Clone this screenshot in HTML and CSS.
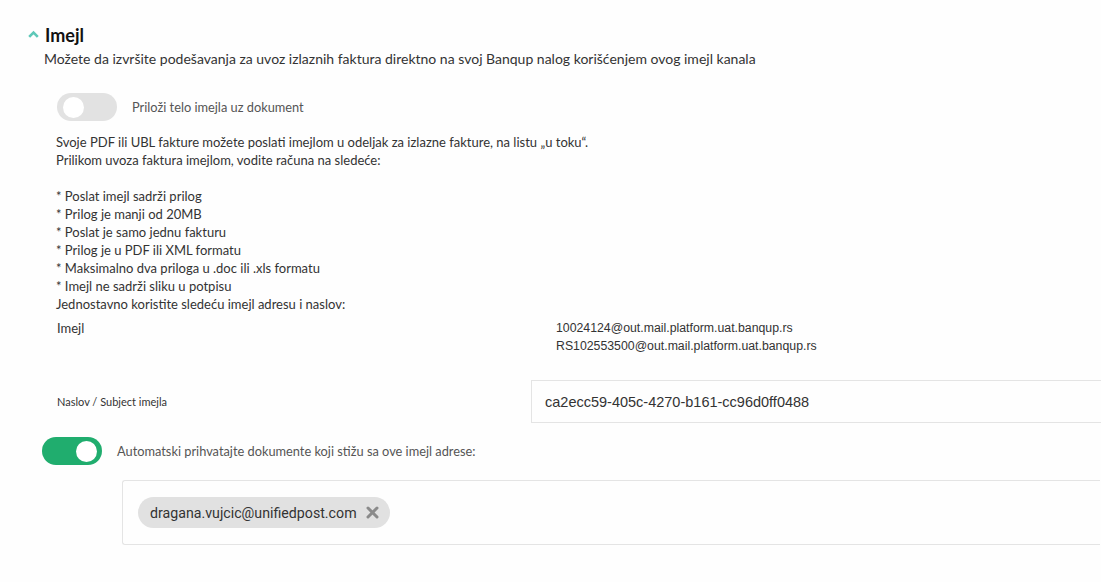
FILE: index.html
```html
<!DOCTYPE html>
<html lang="sr">
<head>
    <meta charset="UTF-8">
    <title>Imejl</title>
    <link rel="stylesheet" href="styles.css">
</head>
<body>
<div class="panel">
    <h2 class="title">
        <svg class="chev" width="11" height="8" viewBox="0 0 11 8"><path d="M1.2 6.8 L5.5 2.5 L9.8 6.8" fill="none" stroke="#5ec8b8" stroke-width="2.6"/></svg>
        Imejl
    </h2>
    <p class="desc">Možete da izvršite podešavanja za uvoz izlaznih faktura direktno na svoj Banqup nalog korišćenjem ovog imejl kanala</p>

    <div class="opt opt_body">
        <span class="switch"><span class="knob"></span></span>
        <span class="opt_label">Priloži telo imejla uz dokument</span>
    </div>

    <div class="info">
        <p>Svoje PDF ili UBL fakture možete poslati imejlom u odeljak za izlazne fakture, na listu „u toku“.</p>
        <p>Prilikom uvoza faktura imejlom, vodite računa na sledeće:</p>
        <p>&nbsp;</p>
        <p>* Poslat imejl sadrži prilog</p>
        <p>* Prilog je manji od 20MB</p>
        <p>* Poslat je samo jednu fakturu</p>
        <p>* Prilog je u PDF ili XML formatu</p>
        <p>* Maksimalno dva priloga u .doc ili .xls formatu</p>
        <p>* Imejl ne sadrži sliku u potpisu</p>
        <p>Jednostavno koristite sledeću imejl adresu i naslov:</p>
    </div>

    <div class="field">
        <div class="f_label">Imejl</div>
        <div class="f_value mails">
            <p>10024124@out.mail.platform.uat.banqup.rs</p>
            <p>RS102553500@out.mail.platform.uat.banqup.rs</p>
        </div>
    </div>

    <div class="field field_subject">
        <div class="f_label small">Naslov / Subject imejla</div>
        <div class="f_value input">ca2ecc59-405c-4270-b161-cc96d0ff0488</div>
    </div>

    <div class="opt opt_auto">
        <span class="switch on"><span class="knob"></span></span>
        <span class="opt_label">Automatski prihvatajte dokumente koji stižu sa ove imejl adrese:</span>
    </div>

    <div class="tags">
        <span class="chip">dragana.vujcic@unifiedpost.com
            <svg class="x" width="13" height="13" viewBox="0 0 13 13"><path d="M2 2 L11 11 M11 2 L2 11" stroke="#8a8a8a" stroke-width="3" stroke-linecap="round"/></svg>
        </span>
    </div>
</div>
</body>
</html>
```

FILE: styles.css
```css
*{margin: 0;padding: 0;box-sizing: border-box;}
html,body{background: #fefefe;overflow: hidden;}
body{font-family: Lato, "Noto Sans", sans-serif;color: #333;}
.panel{width: 1100px;padding: 24px 0 0 28px;}
.title{display: flex;align-items: center;gap: 6px;font-size: 18px;font-weight: 700;color: #111;line-height: 22px;}
.chev{margin-top: -3px;}
.desc{margin: 4px 0 0 16px;font-size: 14px;line-height: 18px;color: #333;}
.opt{display: flex;align-items: center;}
.opt_body{margin: 25px 0 0 29px;}
.opt_auto{margin: 14px 0 0 14px;}
.switch{display: inline-block;flex: none;width: 60px;height: 28px;border-radius: 14px;background: #e2e2e2;position: relative;}
.switch .knob{position: absolute;left: 6px;top: 3.5px;width: 21px;height: 21px;border-radius: 50%;background: #fff;}
.switch.on{background: #20ad6e;}
.switch.on .knob{left: 34px;}
.opt_label{font-size: 12.8px;color: #555;margin-left: 15px;}
.info{margin: 12px 0 0 28px;font-size: 13px;line-height: 18px;color: #333;}
.field{display: flex;margin: 6px 0 0 29px;}
.f_label{width: 474px;flex: none;font-size: 13px;line-height: 18px;}
.f_label.small{font-size: 11px;}
.mails{padding-left: 25px;font-family: "Liberation Sans", Arial, sans-serif;font-size: 12.3px;line-height: 18px;color: #333;}
.field_subject{margin-top: 25px;align-items: center;}
.input{flex: none;width: 600px;height: 43px;border: 1px solid #e4e4e4;padding: 0 13px;display: flex;align-items: center;font-family: "Liberation Sans", Arial, sans-serif;font-size: 14.5px;color: #333;}
.tags{margin: 15px 0 0 94px;height: 65px;border: 1px solid #e4e4e4;border-right: 0;border-radius: 3px 0 0 3px;padding: 16px 15px;}
.chip{display: inline-flex;align-items: center;height: 31px;padding: 0 11px 0 12px;border-radius: 16px;background: #e1e1e1;font-family: Roboto, sans-serif;font-size: 14.2px;color: #333;}
.chip .x{margin-left: 9px;}
```
